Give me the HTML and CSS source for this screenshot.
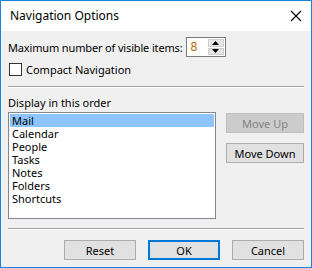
FILE: index.html
```html
<!DOCTYPE html>
<html lang="en">
  <head>
    <meta charset="UTF-8" />
    <title>Navigation Options</title>
    <link rel="stylesheet" href="styles.css">
  </head>
  <body>
    <div class="window">
      <div class="titlebar">
        <span class="title">Navigation Options</span>
        <svg class="close" width="12" height="12" viewBox="0 0 12 12">
          <path d="M1 1 L11 11 M11 1 L1 11" stroke="#000" stroke-width="1.1" fill="none" />
        </svg>
      </div>
      <div class="content">
        <div class="max-row">
          <span class="max-label">Maximum number of visible items:</span>
          <div class="spinner">
            <span class="spin-value">8</span>
            <div class="spin-buttons">
              <div class="spin-btn">
                <svg width="7" height="4" viewBox="0 0 7 4"><path d="M3.5 0 L7 4 L0 4 Z" fill="#000" /></svg>
              </div>
              <div class="spin-btn">
                <svg width="7" height="4" viewBox="0 0 7 4"><path d="M0 0 L7 0 L3.5 4 Z" fill="#000" /></svg>
              </div>
            </div>
          </div>
        </div>
        <label class="check-row">
          <span class="checkbox"></span>
          <span>Compact Navigation</span>
        </label>
        <div class="separator first"></div>
        <div class="order-label">Display in this order</div>
        <div class="order-row">
          <ul class="listbox">
            <li class="selected">Mail</li>
            <li>Calendar</li>
            <li>People</li>
            <li>Tasks</li>
            <li>Notes</li>
            <li>Folders</li>
            <li>Shortcuts</li>
          </ul>
          <div class="side-buttons">
            <button class="btn disabled">Move Up</button>
            <button class="btn">Move Down</button>
          </div>
        </div>
        <div class="separator second"></div>
        <div class="footer">
          <button class="btn wide">Reset</button>
          <button class="btn wide default">OK</button>
          <button class="btn wide">Cancel</button>
        </div>
      </div>
    </div>
  </body>
</html>
```

FILE: styles.css
```css
html,
body {
  margin: 0;
  padding: 0;
}

body {
  font-family: "Noto Sans", "Open Sans", sans-serif;
  font-size: 11px;
  color: #000;
  background: #f0f0f0;
}

.window {
  width: 312px;
  height: 268px;
  border: 1px solid #1883d7;
  box-sizing: border-box;
  background: #f0f0f0;
  display: flex;
  flex-direction: column;
}

.titlebar {
  height: 30px;
  background: #fff;
  display: flex;
  align-items: center;
  justify-content: space-between;
  padding: 0 9px 0 9px;
  flex-shrink: 0;
}

.title {
  font-size: 12px;
  margin-top: -1px;
}

.close {
  margin-top: -1px;
}

.content {
  padding: 0 7px;
  flex: 1;
}

.max-row {
  display: flex;
  align-items: center;
  gap: 3px;
  margin-top: 6px;
  height: 20px;
}

.max-label {
  letter-spacing: -0.15px;
}

.spinner {
  display: flex;
  width: 40px;
  height: 20px;
  border: 1px solid #7a7a7a;
  box-sizing: border-box;
  background: #fff;
}

.spin-value {
  flex: 1;
  padding-left: 4px;
  line-height: 18px;
  font-size: 12px;
  color: #b86a00;
}

.spin-buttons {
  width: 16px;
  display: flex;
  flex-direction: column;
  gap: 1px;
  padding: 1px 1px 1px 0;
}

.spin-btn {
  flex: 1;
  background: #e5e5e5;
  border: 1px solid #d0d0d0;
  display: flex;
  align-items: center;
  justify-content: center;
}

.check-row {
  display: flex;
  align-items: center;
  gap: 4px;
  margin-top: 6px;
  height: 13px;
  padding-left: 1px;
}

.checkbox {
  width: 13px;
  height: 13px;
  border: 1px solid #333;
  box-sizing: border-box;
  background: #fff;
}

.separator {
  height: 1px;
  background: #a0a0a0;
  border-bottom: 1px solid #fff;
}

.separator.first {
  margin-top: 10px;
}

.order-label {
  margin-top: 8px;
  line-height: 14px;
}

.order-row {
  display: flex;
  gap: 10px;
  margin-top: 2px;
}

.listbox {
  list-style: none;
  margin: 0;
  padding: 1px;
  width: 209px;
  height: 107px;
  box-sizing: border-box;
  border: 1px solid #828790;
  background: #fff;
}

.listbox li {
  height: 13px;
  line-height: 13px;
  padding-left: 2px;
}

.listbox li.selected {
  background: #8ec4ff;
}

.side-buttons {
  display: flex;
  flex-direction: column;
  gap: 10px;
  margin-top: 1px;
}

.btn {
  font-family: inherit;
  font-size: 11px;
  width: 78px;
  height: 20px;
  padding: 0;
  background: #e1e1e1;
  border: 1px solid #adadad;
  color: #000;
  box-sizing: border-box;
}

.btn.disabled {
  background: #cccccc;
  border-color: #bfbfbf;
  color: #838383;
}

.separator.second {
  margin-top: 9px;
}

.footer {
  display: flex;
  justify-content: flex-end;
  gap: 12px;
  margin-top: 10px;
}

.btn.wide {
  width: 72px;
}

.btn.default {
  border: 2px solid #0078d7;
}
```
